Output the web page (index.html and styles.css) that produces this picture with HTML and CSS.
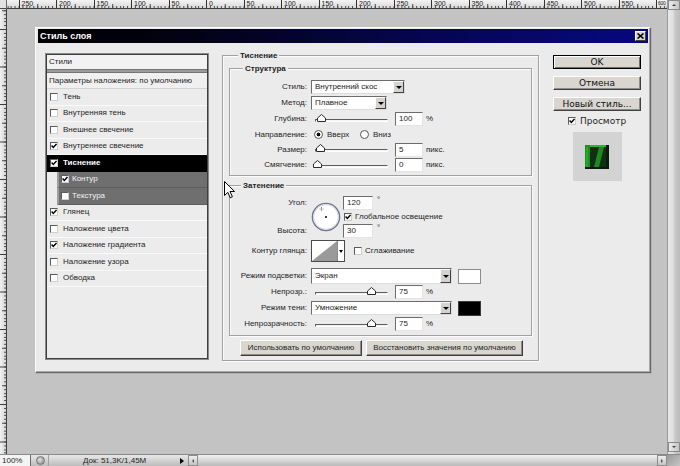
FILE: index.html
```html
<!DOCTYPE html>
<html lang="ru">
<head>
<meta charset="utf-8">
<title>Стиль слоя</title>
<link rel="stylesheet" href="styles.css">
</head>
<body>
<div class="app">
  <div class="corner"></div>
  <div class="ruler-top">
    <span>250</span><span>200</span><span>150</span><span>100</span><span>50</span><span>0</span><span>50</span><span>100</span><span>150</span><span>200</span><span>250</span><span>300</span><span>350</span><span>400</span><span>450</span><span>500</span><span>550</span><span class="last">600</span>
  </div>
  <div class="vscroll">
    <div class="vbtn up"></div>
    <div class="vbtn down"></div>
  </div>
  <div class="ruler-left"></div>
  <div class="canvas">
    <div class="dialog">
      <div class="titlebar">
        <span>Стиль слоя</span>
        <span class="close"><svg width="7" height="6" viewBox="0 0 7 6"><path d="M0.5 0.5 L6.5 5.5 M6.5 0.5 L0.5 5.5" stroke="#000" stroke-width="1.6"/></svg></span>
      </div>
      <div class="dbody">
        <div class="styles">
          <div class="li h1">Стили</div>
          <div class="sep"></div>
          <div class="li h2">Параметры наложения: по умолчанию</div>
          <div class="li"><span class="cb"></span>Тень</div>
          <div class="li"><span class="cb"></span>Внутренняя тень</div>
          <div class="li"><span class="cb"></span>Внешнее свечение</div>
          <div class="li"><span class="cb"><svg width="6" height="6" viewBox="0 0 6 6"><path d="M0.6 2.6 L2.3 4.4 L5.5 0.9" stroke="#000" stroke-width="1.5" fill="none"/></svg></span>Внутреннее свечение</div>
          <div class="li sel"><span class="cb"><svg width="6" height="6" viewBox="0 0 6 6"><path d="M0.6 2.6 L2.3 4.4 L5.5 0.9" stroke="#000" stroke-width="1.5" fill="none"/></svg></span>Тиснение</div>
          <div class="li sub"><span class="cb"><svg width="6" height="6" viewBox="0 0 6 6"><path d="M0.6 2.6 L2.3 4.4 L5.5 0.9" stroke="#000" stroke-width="1.5" fill="none"/></svg></span>Контур</div>
          <div class="li sub"><span class="cb"></span>Текстура</div>
          <div class="li"><span class="cb"><svg width="6" height="6" viewBox="0 0 6 6"><path d="M0.6 2.6 L2.3 4.4 L5.5 0.9" stroke="#000" stroke-width="1.5" fill="none"/></svg></span>Глянец</div>
          <div class="li"><span class="cb"></span>Наложение цвета</div>
          <div class="li"><span class="cb"><svg width="6" height="6" viewBox="0 0 6 6"><path d="M0.6 2.6 L2.3 4.4 L5.5 0.9" stroke="#000" stroke-width="1.5" fill="none"/></svg></span>Наложение градиента</div>
          <div class="li"><span class="cb"></span>Наложение узора</div>
          <div class="li"><span class="cb"></span>Обводка</div>
        </div>

        <div class="group outer">
          <div class="gtitle t-outer">Тиснение</div>

          <div class="group struct">
            <div class="gtitle t-struct">Структура</div>
            <div class="rows">
              <div class="row"><span class="lbl">Стиль:</span><span class="dd w94"><span>Внутренний скос</span><span class="arr"></span></span></div>
              <div class="row"><span class="lbl">Метод:</span><span class="dd w76"><span>Плавное</span><span class="arr"></span></span></div>
              <div class="row"><span class="lbl">Глубина:</span><span class="slider"><span class="track"><span class="thumb" style="left:1px"><svg width="9" height="8" viewBox="0 0 9 8"><path d="M0.5 7.5 V4 L4.5 0.5 L8.5 4 V7.5 Z" fill="#fff" stroke="#2a2a2a"/></svg></span></span></span><span class="num">100</span><span class="unit">%</span></div>
              <div class="row r15"><span class="lbl">Направление:</span><span class="rad on"></span><span class="rtext first">Вверх</span><span class="rad"></span><span class="rtext">Вниз</span></div>
              <div class="row r15"><span class="lbl">Размер:</span><span class="slider"><span class="track"><span class="thumb" style="left:0px"><svg width="9" height="8" viewBox="0 0 9 8"><path d="M0.5 7.5 V4 L4.5 0.5 L8.5 4 V7.5 Z" fill="#fff" stroke="#2a2a2a"/></svg></span></span></span><span class="num">5</span><span class="unit">пикс.</span></div>
              <div class="row"><span class="lbl">Смягчение:</span><span class="slider"><span class="track"><span class="thumb" style="left:-3px"><svg width="9" height="8" viewBox="0 0 9 8"><path d="M0.5 7.5 V4 L4.5 0.5 L8.5 4 V7.5 Z" fill="#fff" stroke="#2a2a2a"/></svg></span></span></span><span class="num">0</span><span class="unit">пикс.</span></div>
            </div>
          </div>

          <div class="group shade">
            <div class="gtitle t-shade">Затенение</div>
            <div class="angle">
              <span class="lbl a1">Угол:</span>
              <span class="dial"><svg width="30" height="30" viewBox="0 0 30 30"><circle cx="15" cy="15" r="13.6" fill="#fff" stroke="#6c7690" stroke-width="1.4"/><circle cx="15" cy="15" r="12.4" fill="none" stroke="#c6cad4" stroke-width="0.8"/><path d="M10.5 5 V9 M8.5 7 H12.5" stroke="#666" stroke-width="0.8" stroke-dasharray="1 0.6"/><circle cx="15" cy="15" r="1.1" fill="#111"/></svg></span>
              <span class="ctl a1"><span class="num n30">120</span><span class="deg">°</span></span>
              <span class="ctl a2"><span class="cb"><svg width="6" height="6" viewBox="0 0 6 6"><path d="M0.6 2.6 L2.3 4.4 L5.5 0.9" stroke="#000" stroke-width="1.5" fill="none"/></svg></span>Глобальное освещение</span>
              <span class="lbl a3">Высота:</span>
              <span class="ctl a3"><span class="num n30">30</span><span class="deg">°</span></span>
            </div>
            <div class="row contour-row"><span class="lbl">Контур глянца:</span>
              <span class="contour"><svg width="25" height="20" viewBox="0 0 25 20"><rect width="25" height="20" fill="#fff"/><polygon points="0,20 25,0 25,20" fill="#9a9a9a"/></svg><span class="carr"></span></span>
              <span class="cb ml9"></span><span>Сглаживание</span>
            </div>
            <div class="row"><span class="lbl">Режим подсветки:</span><span class="dd w141 h15"><span>Экран</span><span class="arr"></span></span><span class="sw white"></span></div>
            <div class="row"><span class="lbl">Непрозр.:</span><span class="slider"><span class="track"><span class="thumb" style="left:51px"><svg width="9" height="8" viewBox="0 0 9 8"><path d="M0.5 7.5 V4 L4.5 0.5 L8.5 4 V7.5 Z" fill="#fff" stroke="#2a2a2a"/></svg></span></span></span><span class="num">75</span><span class="unit">%</span></div>
            <div class="row"><span class="lbl">Режим тени:</span><span class="dd w141"><span>Умножение</span><span class="arr"></span></span><span class="sw black"></span></div>
            <div class="row"><span class="lbl">Непрозрачность:</span><span class="slider"><span class="track"><span class="thumb" style="left:51px"><svg width="9" height="8" viewBox="0 0 9 8"><path d="M0.5 7.5 V4 L4.5 0.5 L8.5 4 V7.5 Z" fill="#fff" stroke="#2a2a2a"/></svg></span></span></span><span class="num">75</span><span class="unit">%</span></div>
          </div>

          <div class="defbtns">
            <span class="dbtn b1">Использовать по умолчанию</span>
            <span class="dbtn b2">Восстановить значения по умолчанию</span>
          </div>
        </div>

        <div class="side">
          <span class="sbtn ok">OK</span>
          <span class="sbtn">Отмена</span>
          <span class="sbtn">Новый стиль...</span>
          <span class="prev"><span class="cb"><svg width="6" height="6" viewBox="0 0 6 6"><path d="M0.6 2.6 L2.3 4.4 L5.5 0.9" stroke="#000" stroke-width="1.5" fill="none"/></svg></span>Просмотр</span>
          <span class="preview"><svg width="24" height="24" viewBox="0 0 24 24"><rect width="24" height="24" fill="#142e14"/><rect x="0" y="0" width="24" height="2" fill="#2cb82f"/><rect x="0" y="0" width="5" height="24" fill="#1f8f22"/><rect x="1" y="2" width="2" height="20" fill="#27a92a"/><polygon points="14,2 19,2 14,22 9,22" fill="#1b8a1f"/><rect x="0" y="22" width="24" height="2" fill="#0b1a0b"/><rect x="21" y="0" width="3" height="24" fill="#0c1c0c"/></svg></span>
        </div>
      </div>
    </div>
  </div>
  <div class="status">
    <div class="zoomcell">100%</div>
    <div class="sicon"><i></i></div>
    <div class="doc">Док: 51,3K/1,45M</div>
    <div class="play"><i></i></div>
    <div class="hbtn left"><i></i></div>
    <div class="htrack"></div>
    <div class="hbtn right"><i></i></div>
    <div class="hcorner"></div>
  </div>
</div>
<svg class="cursor" width="12" height="18" viewBox="0 0 12 18"><path d="M0.5 0.5 L0.5 14.5 L3.8 11.3 L6.2 16.8 L8.4 15.8 L6 10.5 L10.6 10.5 Z" fill="#fff" stroke="#000" stroke-width="1"/></svg>
</body>
</html>
```

FILE: styles.css
```css
* { box-sizing: border-box; margin: 0; padding: 0; }
html, body { width: 680px; height: 466px; overflow: hidden; }
body {
  background: #c3c3c3;
  font-family: "Liberation Sans", Arial, sans-serif;
  font-size: 8px;
  line-height: 1;
  color: #1e1e1e;
}
.app {
  display: grid;
  grid-template-columns: 7px 660px 13px;
  grid-template-rows: 9px 445px 12px;
  width: 680px;
  height: 466px;
}

/* rulers */
.corner { background: #e2e2e2; border-right: 1px solid #6a6a6a; border-bottom: 1px solid #4a4a4a; }
.ruler-top {
  display: flex;
  overflow: hidden;
  padding-left: 11.5px;
  border-bottom: 1px solid #3e3e3e;
  background:
    repeating-linear-gradient(90deg, #4a4a4a 0 1px, transparent 1px 3.75px) 11.5px 100% / 37.5px 2px repeat-x,
    linear-gradient(90deg, transparent 0 18.75px, #4a4a4a 18.75px 19.75px, transparent 19.75px) 11.5px 100% / 37.5px 4px repeat-x,
    linear-gradient(#f4f4f4, #d8d8d8);
}
.ruler-top span {
  flex: 0 0 37.5px;
  height: 8px;
  border-left: 1px solid #333;
  font-size: 7px;
  line-height: 7px;
  padding-left: 2px;
  color: #222;
}
.ruler-top span.last { flex: 0 0 10px; padding-left: 1px; font-size: 5px; letter-spacing: -0.3px; }
.ruler-left {
  border-right: 1px solid #3e3e3e;
  background:
    linear-gradient(180deg, #3a3a3a 0 1px, transparent 1px) 0 20px / 100% 37.5px repeat-y,
    linear-gradient(180deg, transparent 0 18.75px, #4a4a4a 18.75px 19.75px, transparent 19.75px) 100% 20px / 4px 37.5px repeat-y,
    repeating-linear-gradient(180deg, #4a4a4a 0 1px, transparent 1px 3.75px) 100% 20px / 2px 37.5px repeat-y,
    linear-gradient(90deg, #f0f0f0, #d6d6d6);
}

/* vertical scrollbar */
.vscroll {
  grid-column: 3;
  grid-row: 1 / 3;
  display: flex;
  flex-direction: column;
  justify-content: space-between;
  padding-bottom: 2px;
  border-left: 1px solid #9a9a9a;
  background: linear-gradient(90deg, #e8e8e8 0, #e0e0e0 40%, #c8c8c8 60%, #bcbcbc 100%);
}
.vbtn {
  height: 10px;
  background: linear-gradient(90deg, #ececec, #c4c4c4);
  border: 1px solid #8a8a8a;
  display: flex;
  align-items: center;
  justify-content: center;
}
.vbtn.up::after { content: ""; border-left: 2px solid transparent; border-right: 2px solid transparent; border-bottom: 2px solid #444; }
.vbtn.down::after { content: ""; border-left: 2px solid transparent; border-right: 2px solid transparent; border-top: 2px solid #444; }

/* canvas + dialog */
.canvas { padding: 18px 0 0 28px; overflow: hidden; }
.dialog {
  width: 616px;
  height: 346px;
  background: #ebebeb;
  border: 1px solid;
  border-color: #fbfbfb #686868 #686868 #fbfbfb;
  padding: 1px 2px 2px;
  box-shadow: inset -1px -1px 0 #a8a8a8, 1px 1px 0 #b2b2b2;
  display: flex;
  flex-direction: column;
}
.titlebar {
  flex: none;
  height: 14px;
  display: flex;
  align-items: center;
  justify-content: space-between;
  padding: 0 2px 0 2px;
  background: linear-gradient(90deg, #000 0%, #020214 25%, #05054c 60%, #080880 100%);
  color: #fff;
  font-weight: bold;
  font-size: 9px;
}
.close {
  width: 11px;
  height: 10px;
  background: #d8d5d0;
  border: 1px solid;
  border-color: #fff #404040 #404040 #fff;
  display: flex;
  align-items: center;
  justify-content: center;
}
.dbody { display: flex; align-items: flex-start; padding: 10px 7px 0; }

/* styles list */
.styles {
  flex: none;
  width: 164px;
  height: 307px;
  border: 1px solid #8a8a8a;
  padding: 1px;
  box-shadow: inset 1px 1px 0 #3e3e3e, inset -1px -1px 0 #3e3e3e;
  background: #ececec;
  display: flex;
  flex-direction: column;
}
.li {
  flex: none;
  height: 16.5px;
  display: flex;
  align-items: center;
  padding-left: 3px;
  border-bottom: 1px solid #fafafa;
  white-space: nowrap;
}
.li.h1 { height: 14px; padding-left: 2px; background: #f2f2f2; border-bottom: none; }
.sep { flex: none; height: 4px; background: #9b9b9b; border-top: 1px solid #747474; border-bottom: 1px solid #747474; }
.li.h2 { height: 16px; padding-left: 2px; background: #f0f0f0; border-bottom: 1px solid #d4d4d4; }
.li.sel { background: #000; color: #fff; font-weight: bold; border-bottom: none; }
.li.sub {
  margin-left: 10px;
  background: #6f6f6f;
  color: #f2f2f2;
  border-left: 2px solid #9c9c9c;
  border-bottom: 1px solid #5e5e5e;
  padding-left: 2px;
}
.li.sub .cb { margin-right: 3px; }

.cb {
  flex: none;
  width: 8px;
  height: 8px;
  background: #fff;
  border: 1px solid;
  border-color: #5a5a5a #cfcfcf #cfcfcf #5a5a5a;
  margin-right: 5px;
  display: inline-flex;
  align-items: center;
  justify-content: center;
}
.cb svg { display: block; }

/* groups */
.group {
  border: 1px solid #a0a0a0;
  box-shadow: 1px 1px 0 #fcfcfc, inset 1px 1px 0 #fcfcfc;
}
.gtitle {
  width: max-content;
  height: 11px;
  line-height: 11px;
  margin-top: -6px;
  padding: 0 2px;
  background: #ebebeb;
  font-weight: bold;
}
.outer {
  flex: none;
  width: 317px;
  margin: 2px 0 0 13px;
  padding: 0 6px 4px;
}
.t-outer { margin-left: 9px; }
.struct { margin-top: 7px; padding-bottom: 2px; }
.t-struct { margin-left: 13px; }
.rows { margin-top: 5px; }
.shade { margin-top: 9px; padding-bottom: 3px; }
.t-shade { margin-left: 11px; }

.row { display: flex; align-items: center; height: 16px; white-space: nowrap; }
.row.r15 { height: 15px; }
.lbl { flex: none; width: 77px; margin-right: 4px; text-align: right; white-space: nowrap; }

.dd {
  flex: none;
  height: 14px;
  background: #fff;
  border: 1px solid;
  border-color: #6c6c6c #dcdcdc #dcdcdc #6c6c6c;
  display: flex;
  align-items: center;
  justify-content: space-between;
  padding-left: 3px;
}
.dd.h15 { height: 16px; }
.w94 { width: 94px; }
.w76 { width: 76px; }
.w141 { width: 141px; }
.dd .arr {
  flex: none;
  width: 11px;
  height: 100%;
  background: #d6d3ce;
  border: 1px solid;
  border-color: #fafafa #404040 #404040 #fafafa;
  display: flex;
  align-items: center;
  justify-content: center;
}
.dd .arr::after { content: ""; border-left: 3px solid transparent; border-right: 3px solid transparent; border-top: 3px solid #000; }

.slider { flex: none; width: 80px; height: 14px; display: flex; align-items: center; padding: 2px 3px 0 4px; }
.track {
  flex: 1;
  height: 3px;
  position: relative;
  background: #f4f4f4;
  border: 1px solid;
  border-color: #5c5c5c #fff #fff #5c5c5c;
}
.thumb { position: absolute; top: -6px; width: 9px; height: 8px; }
.thumb svg { display: block; }

.num {
  flex: none;
  width: 28px;
  height: 14px;
  margin-left: 4px;
  padding-left: 3px;
  background: #fff;
  border: 1px solid;
  border-color: #6c6c6c #e4e4e4 #e4e4e4 #6c6c6c;
  display: flex;
  align-items: center;
}
.unit { margin-left: 3px; }

.rad {
  flex: none;
  width: 9px;
  height: 9px;
  margin-left: 3px;
  border-radius: 50%;
  border: 1px solid #555;
  background: #fff;
}
.rad.on { background: radial-gradient(circle, #000 0 1.6px, #fff 2.2px); }
.rtext { margin-left: 4px; }
.rtext.first { width: 30px; }

/* angle block */
.angle {
  margin-top: 5px;
  display: grid;
  grid-template-columns: 81px 32px auto;
  grid-template-rows: 14px 14px 14px;
  align-items: center;
}
.angle .lbl { margin-right: 0; padding-right: 4px; width: 81px; }
.a1 { grid-row: 1; }
.a2 { grid-row: 2; }
.a3 { grid-row: 3; }
.angle .lbl { grid-column: 1; }
.angle .ctl { grid-column: 3; display: flex; align-items: center; white-space: nowrap; }
.dial { grid-column: 2; grid-row: 1 / 4; align-self: center; }
.dial svg { display: block; }
.n30 { width: 30px; margin-left: 0; }
.deg { margin-left: 4px; align-self: flex-start; }
.a2 .cb { margin-left: 1px; margin-right: 3px; }

.contour-row { height: 22px; margin-top: 2px; margin-bottom: 6px; }
.contour {
  flex: none;
  display: flex;
  border: 1px solid #4a4a4a;
  background: #fff;
}
.contour svg { display: block; }
.carr {
  width: 7px;
  border-left: 1px solid #8a8a8a;
  display: flex;
  align-items: center;
  justify-content: center;
}
.carr::after { content: ""; border-left: 2px solid transparent; border-right: 2px solid transparent; border-top: 3px solid #000; }
.ml9 { margin-left: 9px; margin-right: 3px; }

.sw { flex: none; width: 23px; height: 15px; margin-left: 6px; border: 1px solid #8c8c8c; }
.sw.white { background: #fff; }
.sw.black { background: #000; border-color: #3a3a3a; }

.defbtns { display: flex; gap: 4px; margin: 4px 0 0 11px; }
.dbtn {
  height: 16px;
  display: flex;
  align-items: center;
  justify-content: center;
  background: #d9d6d0;
  border: 1px solid;
  border-color: #fff #3c3c3c #3c3c3c #fff;
  box-shadow: inset -1px -1px 0 #8c8c8c;
  white-space: nowrap;
}
.b1 { width: 122px; }
.b2 { width: 157px; }

/* side */
.side {
  flex: none;
  width: 88px;
  margin: 2px 0 0 14px;
  display: flex;
  flex-direction: column;
  align-items: center;
  gap: 7px;
  font-family: "DejaVu Sans", sans-serif;
  font-size: 9px;
}
.sbtn {
  width: 88px;
  height: 14px;
  display: flex;
  align-items: center;
  justify-content: center;
  background: #d9d6d0;
  border: 1px solid;
  border-color: #fff #404040 #404040 #fff;
  box-shadow: inset -1px -1px 0 #8c8c8c;
  color: #111;
}
.sbtn.ok { border-color: #000; box-shadow: inset 1px 1px 0 #fff, inset -1px -1px 0 #707070; }
.prev { display: flex; align-items: center; height: 14px; margin-top: -4px; }
.prev .cb { margin-right: 4px; }
.preview {
  width: 49px;
  height: 49px;
  margin-top: -3px;
  background: #d3d3d3;
  display: flex;
  align-items: center;
  justify-content: center;
}
.preview svg { display: block; }

/* status bar */
.status {
  grid-column: 1 / 4;
  display: flex;
  align-items: stretch;
  background: linear-gradient(#e8e8e8, #bcbcbc);
  border-top: 1px solid #8a8a8a;
}
.zoomcell {
  width: 31px;
  background: #f4f4f4;
  border-right: 1px solid #6c6c6c;
  padding-left: 2px;
  display: flex;
  align-items: center;
  font-size: 8px;
}
.sicon { width: 17px; display: flex; align-items: center; padding-left: 5px; }
.sicon i { width: 9px; height: 9px; border-radius: 50%; background: radial-gradient(circle at 40% 40%, #e0e0e0, #808080); border: 1px solid #777; }
.doc { width: 130px; padding-left: 34px; display: flex; align-items: center; font-size: 8px; border-left: 1px solid #a0a0a0; }
.play { width: 10px; display: flex; align-items: center; padding-left: 2px; }
.play i { border-top: 3px solid transparent; border-bottom: 3px solid transparent; border-left: 4px solid #000; }
.hbtn { width: 10px; display: flex; align-items: center; justify-content: center; background: linear-gradient(#eeeeee, #c4c4c4); border: 1px solid #8c8c8c; }
.hbtn.left i { border-top: 2px solid transparent; border-bottom: 2px solid transparent; border-right: 2px solid #555; }
.hbtn.right i { border-top: 2px solid transparent; border-bottom: 2px solid transparent; border-left: 2px solid #555; }
.htrack { flex: 1; background: linear-gradient(#f0f0f0, #dadada 45%, #b8b8b8 100%); }
.hcorner { width: 13px; background: linear-gradient(135deg, #9a9a9a, #c4c4c4); }

.cursor { position: absolute; left: 224px; top: 181px; }
```
